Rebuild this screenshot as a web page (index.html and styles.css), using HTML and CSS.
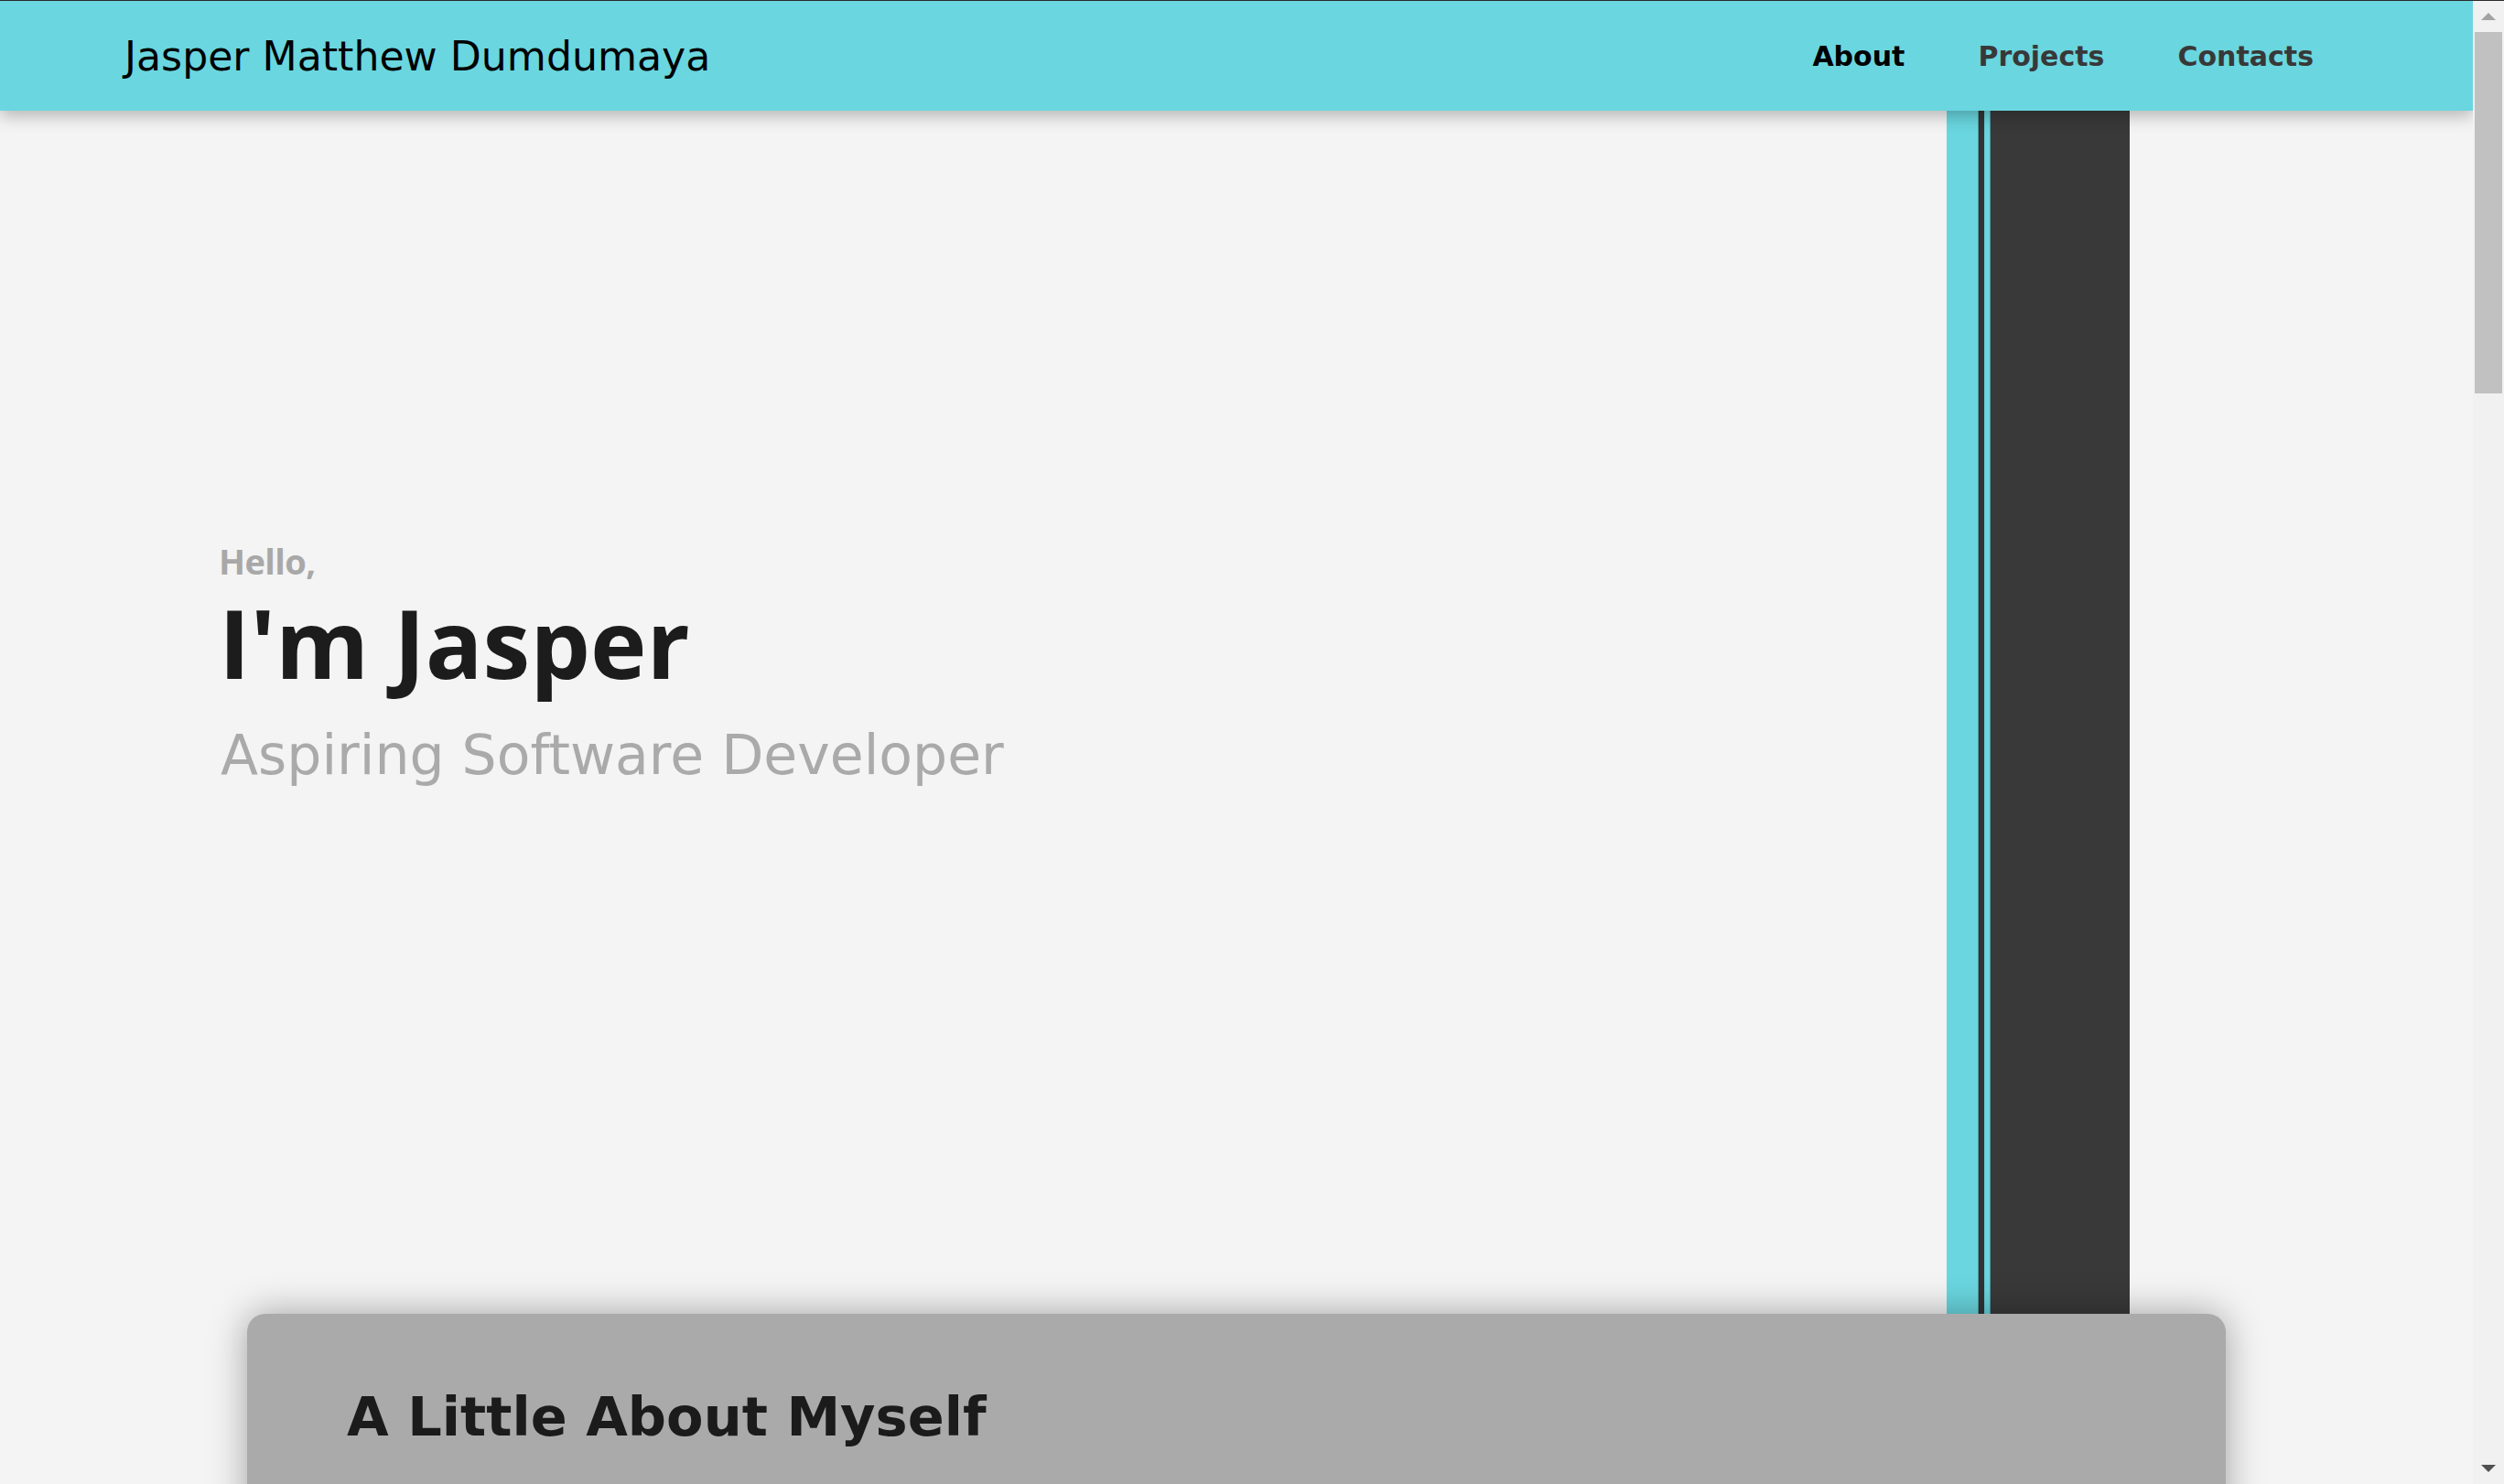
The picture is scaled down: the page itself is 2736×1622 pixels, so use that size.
FILE: index.html
```html
<!DOCTYPE html>
<html lang="en">
<head>
<meta charset="utf-8">
<title>Jasper Matthew Dumdumaya</title>
<link rel="stylesheet" href="styles.css">
</head>
<body>
<div class="frame">
  <div class="topline"></div>
  <div class="window">
    <div class="viewport">
      <header class="navbar">
        <a class="brand" href="#">Jasper Matthew Dumdumaya</a>
        <nav class="nav-links">
          <a class="nav-link active" href="#about">About</a>
          <a class="nav-link" href="#projects">Projects</a>
          <a class="nav-link" href="#contacts">Contacts</a>
        </nav>
      </header>
      <section class="hero">
        <div class="intro">
          <p class="hello">Hello,</p>
          <h1 class="name">I'm Jasper</h1>
          <p class="role">Aspiring Software Developer</p>
        </div>
        <div class="stripes"></div>
      </section>
      <section class="about-card" id="about">
        <h2 class="about-title">A Little About Myself</h2>
      </section>
    </div>
    <div class="scrollbar">
      <div class="sb-btn"><span class="arrow-up"></span></div>
      <div class="sb-thumb"></div>
      <div class="sb-rest"></div>
      <div class="sb-btn"><span class="arrow-down"></span></div>
    </div>
  </div>
</div>
</body>
</html>
```
FILE: styles.css
```css
html, body {
  margin: 0;
  padding: 0;
  height: 100%;
  overflow: hidden;
}
body {
  background: #f4f4f4;
  font-family: "DejaVu Sans", Verdana, sans-serif;
}
.frame {
  display: flex;
  flex-direction: column;
  height: 100vh;
}
.topline {
  height: 1px;
  background: #2b2b2b;
  flex: none;
}
.window {
  flex: 1;
  display: flex;
  min-height: 0;
}
.viewport {
  flex: 1;
  overflow: hidden;
  background: #f4f4f4;
}
.navbar {
  position: relative;
  z-index: 2;
  height: 120px;
  background: #6ad6df;
  display: flex;
  align-items: center;
  justify-content: space-between;
  padding: 0 174px 0 136px;
  box-shadow: 0 5px 18px rgba(0, 0, 0, 0.28);
}
.brand {
  font-family: "DejaVu Sans", sans-serif;
  font-size: 44.2px;
  color: #000;
  text-decoration: none;
}
.nav-links {
  display: flex;
  gap: 80px;
}
.nav-link {
  font-family: "DejaVu Sans", sans-serif;
  font-weight: 700;
  font-size: 30px;
  color: #383838;
  text-decoration: none;
}
.nav-link.active {
  color: #000;
}
.hero {
  height: 1315px;
  display: flex;
  padding-right: 375px;
}
.intro {
  flex: 1;
  padding: 473px 0 0 239px;
}
.hello {
  margin: 0;
  font-family: "Open Sans", "Noto Sans", sans-serif;
  font-weight: 700;
  font-size: 38px;
  line-height: 38px;
  letter-spacing: -0.6px;
  color: #a8a8a8;
}
.name {
  margin: 18px 0 0;
  font-family: "Open Sans", "Noto Sans", sans-serif;
  font-weight: 700;
  font-size: 104px;
  line-height: 104px;
  color: #1c1c1c;
}
.role {
  margin: 41px 0 0;
  font-family: "DejaVu Sans", sans-serif;
  font-size: 60px;
  line-height: 60px;
  color: #aaaaaa;
  padding-left: 2px;
}
.stripes {
  width: 200px;
  flex: none;
  background: linear-gradient(to right,
    #6ad6df 0, #6ad6df 34px, #4f9ea5 34px, #4f9ea5 35px,
    #333333 35px, #333333 41px,
    #5fb8c0 41px, #6ad6df 42px, #6ad6df 47px, #4f9ea5 47px, #4f9ea5 48px,
    #393939 48px, #393939 200px);
}
.about-card {
  position: relative;
  z-index: 1;
  margin: 0 270px;
  min-height: 700px;
  background: #aaaaaa;
  border-radius: 20px 20px 0 0;
  padding: 78px 109px 0;
  box-shadow: 0 0 40px rgba(0, 0, 0, 0.35);
}
.about-title {
  margin: 0;
  font-family: "DejaVu Sans", sans-serif;
  font-weight: 700;
  font-size: 59px;
  color: #1b1b1b;
}
.scrollbar {
  width: 34px;
  flex: none;
  background: #f1f1f1;
  display: flex;
  flex-direction: column;
  align-items: center;
}
.sb-btn {
  height: 34px;
  width: 34px;
  display: flex;
  align-items: center;
  justify-content: center;
  flex: none;
}
.arrow-up {
  width: 0;
  height: 0;
  border-left: 8px solid transparent;
  border-right: 8px solid transparent;
  border-bottom: 8px solid #a3a3a3;
}
.arrow-down {
  width: 0;
  height: 0;
  border-left: 8px solid transparent;
  border-right: 8px solid transparent;
  border-top: 8px solid #505050;
}
.sb-thumb {
  width: 30px;
  height: 395px;
  background: #c1c1c1;
  flex: none;
}
.sb-rest {
  flex: 1;
}
```
